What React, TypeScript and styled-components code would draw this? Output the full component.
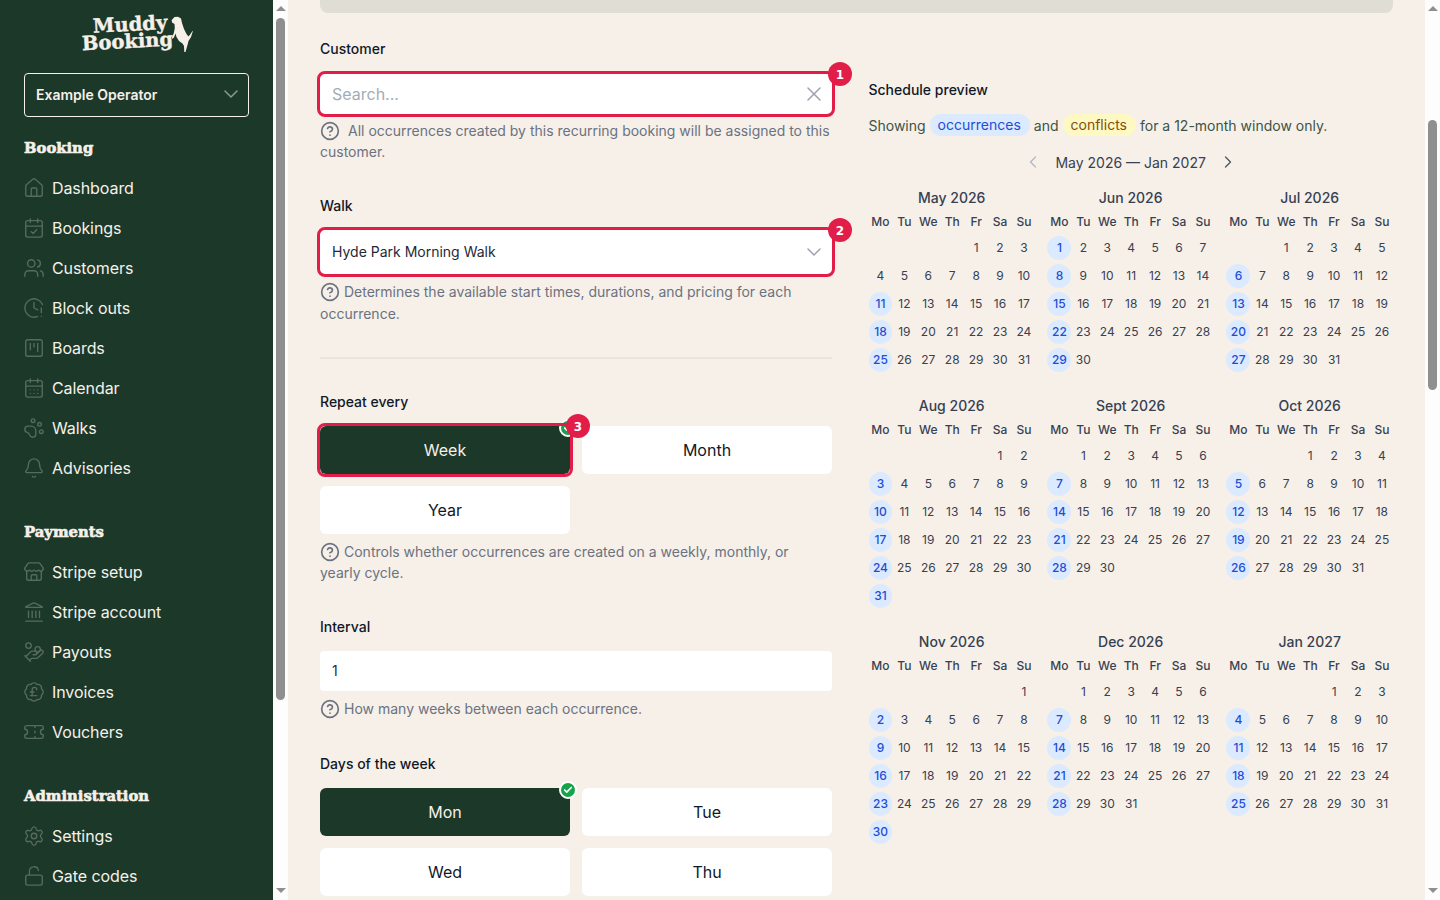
import { useLayoutEffect, useRef } from 'react';
import styled, { createGlobalStyle } from 'styled-components';
import {
  BadgePoundSterling,
  CalendarCheck,
  CalendarDays,
  Bell,
  Check,
  ChevronDown,
  ChevronLeft,
  ChevronRight,
  CircleHelp,
  ClockAlert,
  HandCoins,
  House,
  Landmark,
  LockOpen,
  PawPrint,
  Settings,
  SquareKanban,
  Store,
  Ticket,
  Users,
  X,
} from 'lucide-react';

const GlobalStyle = createGlobalStyle`
  html, body {
    margin: 0;
    height: 100%;
    overflow: hidden;
    font-family: Inter, "Noto Sans", sans-serif;
  }
  * {
    box-sizing: border-box;
  }
`;

const Page = styled.div`
  display: flex;
  height: 100vh;
`;

const Sidebar = styled.aside`
  flex: 0 0 273px;
  overflow: hidden;
  background: #1c3829;
`;

const SideInner = styled.div`
  min-height: 1148px;
  padding: 0 24px;
  color: #f6f0e9;
`;

const ScrollTrack = styled.div`
  flex: 0 0 15px;
  display: flex;
  flex-direction: column;
  align-items: center;
  background: #fdfdfd;
`;

const ScrollArrow = styled.span<{ $down?: boolean }>`
  flex: none;
  width: 0;
  height: 0;
  margin: ${(p) => (p.$down ? '4px 0 7px' : '6px 0 4px')};
  border-left: 5px solid transparent;
  border-right: 5px solid transparent;
  border-bottom: ${(p) => (p.$down ? 0 : 5)}px solid #8f8f8f;
  border-top: ${(p) => (p.$down ? 5 : 0)}px solid #8f8f8f;
`;

const ScrollThumb = styled.span<{ $top: number; $size: number }>`
  width: 9px;
  height: ${(p) => p.$size}px;
  margin-top: ${(p) => p.$top}px;
  margin-bottom: auto;
  border-radius: 5px;
  background: #8f8f8f;
`;

const Logo = styled.div`
  position: relative;
  width: 112px;
  height: 76px;
  margin-left: 57px;
  padding-top: 19px;
  color: #f6f0e9;
`;

const LogoText = styled.div`
  width: 92px;
  font-family: "DejaVu Serif", serif;
  font-weight: 700;
  font-size: 19.5px;
  line-height: 17px;
  text-align: center;
  -webkit-text-stroke: 0.4px #f6f0e9;
  transform: rotate(-3deg);
`;

const LogoTop = styled.span`
  display: inline-block;
  margin-left: 7px;
`;

const Dog = styled.svg`
  position: absolute;
  left: 89px;
  top: 18px;
`;

const OperatorSelect = styled.div`
  display: flex;
  align-items: center;
  justify-content: space-between;
  height: 44px;
  padding: 0 5px 2px 11px;
  border: 1px solid #f6f0e9;
  border-radius: 4px;
  font-size: 14px;
  font-weight: 600;
  svg {
    color: #8b9a91;
  }
`;

const SectionTitle = styled.h3`
  margin: 21px 0 10px;
  font-family: "DejaVu Serif", serif;
  font-size: 14.8px;
  font-weight: 700;
  line-height: 20px;
  -webkit-text-stroke: 0.6px #f6f0e9;
`;

const NavGroup = styled.nav`
  margin-bottom: 34px;
`;

const NavItem = styled.a`
  display: flex;
  align-items: center;
  gap: 7px;
  height: 40px;
  margin-left: -1px;
  font-size: 16px;
  letter-spacing: -0.08px;
  svg {
    flex: none;
    color: #566b60;
  }
`;

const Main = styled.main`
  flex: 1;
  overflow: hidden;
  background: #f6f0e9;
`;

const MainInner = styled.div`
  min-height: 2900px;
  padding: 0 32px;
`;

const TopBar = styled.div`
  height: 40px;
  margin-top: 323px;
  border-radius: 0 0 8px 8px;
  background: #e0ddd5;
`;

const Columns = styled.div`
  display: grid;
  grid-template-columns: 512px 1fr;
  column-gap: 36.5px;
  align-items: start;
  padding-top: 26px;
`;

const Field = styled.section<{ $gap?: number }>`
  margin-bottom: ${(p) => p.$gap ?? 34}px;
`;

const Label = styled.label<{ $gap?: number }>`
  display: block;
  margin-bottom: ${(p) => p.$gap ?? 14}px;
  font-size: 14px;
  font-weight: 500;
  line-height: 20px;
  color: #111827;
`;

const Highlight = styled.div`
  position: relative;
  border-radius: 8px;
  background: #fff;
  &::after {
    content: '';
    position: absolute;
    inset: -3px;
    border: 3px solid #e11d48;
    border-radius: 8px;
    pointer-events: none;
  }
`;

const StepBadge = styled.span`
  position: absolute;
  z-index: 2;
  top: -12px;
  right: -20px;
  display: flex;
  align-items: center;
  justify-content: center;
  width: 24px;
  height: 24px;
  padding-top: 1px;
  border-radius: 50%;
  background: #e11d48;
  color: #fff;
  font-family: "DejaVu Sans", sans-serif;
  font-size: 12px;
  font-weight: 700;
`;

const TextBox = styled.div<{ $h?: number }>`
  display: flex;
  align-items: center;
  justify-content: space-between;
  height: ${(p) => p.$h ?? 40}px;
  padding: 0 6px 1px 12px;
  border-radius: 4px;
  background: #fff;
  font-size: 14px;
  color: #1f2937;
  svg {
    color: #9ca3af;
  }
`;

const Placeholder = styled.span`
  margin-top: 1px;
  font-size: 16px;
  color: #a3acb9;
`;

const Help = styled.p<{ $wide?: boolean; $top?: number; $line?: number }>`
  margin: ${(p) => p.$top ?? 7}px 0 0;
  font-size: 14px;
  line-height: ${(p) => p.$line ?? 21}px;
  color: #6b7280;
  svg {
    vertical-align: -5px;
    margin-right: ${(p) => (p.$wide ? 8 : 4)}px;
  }
`;

const Divider = styled.hr`
  height: 2px;
  margin: 0 0 33px;
  border: 0;
  background: #e9e4dc;
`;

const Choices = styled.div`
  display: grid;
  grid-template-columns: 1fr 1fr;
  gap: 12px;
`;

const ChoiceButton = styled.button<{ $active?: boolean }>`
  position: relative;
  display: block;
  width: 100%;
  height: 48px;
  border: 0;
  border-radius: 6px;
  background: ${(p) => (p.$active ? '#1c3829' : '#fff')};
  color: ${(p) => (p.$active ? '#f6f0e9' : '#111827')};
  font-family: inherit;
  font-size: 16px;
`;

const CheckMark = styled.span`
  position: absolute;
  top: -7px;
  right: -7px;
  display: flex;
  align-items: center;
  justify-content: center;
  width: 18px;
  height: 18px;
  border: 2px solid #fff;
  border-radius: 50%;
  background: #16a34a;
  color: #fff;
`;

const Preview = styled.div`
  padding-top: 41px;
`;

const PreviewTitle = styled.h4`
  margin: 0 0 14px;
  font-size: 14px;
  font-weight: 500;
  line-height: 20px;
  color: #111827;
`;

const Legend = styled.p`
  display: flex;
  align-items: center;
  gap: 4px;
  height: 22px;
  margin: 0 0 14px;
  font-size: 14px;
  color: #3d5347;
`;

const Pill = styled.span<{ $tone: 'blue' | 'yellow' }>`
  padding: 2px 9px 2px 8px;
  border-radius: 999px;
  line-height: 18px;
  background: ${(p) => (p.$tone === 'blue' ? '#dbeafe' : '#fef9c3')};
  color: ${(p) => (p.$tone === 'blue' ? '#1d4ed8' : '#854d0e')};
`;

const RangeNav = styled.div`
  display: flex;
  align-items: center;
  justify-content: center;
  gap: 12px;
  height: 24px;
  margin-bottom: 14px;
  padding-right: 1px;
  font-size: 14px;
  color: #374151;
`;

const NavArrow = styled.span<{ $muted?: boolean }>`
  display: flex;
  color: ${(p) => (p.$muted ? '#b4b8bd' : '#4b5563')};
`;

const MonthGrid = styled.div`
  display: grid;
  grid-template-columns: repeat(3, 167.4px);
  column-gap: 11.6px;
  row-gap: 24px;
  align-items: start;
`;

const MonthTitle = styled.div`
  margin-bottom: 2px;
  padding-right: 1px;
  font-size: 14px;
  font-weight: 500;
  line-height: 20px;
  text-align: center;
  color: #374151;
`;

const Week = styled.div`
  display: grid;
  grid-template-columns: repeat(7, 1fr);
  height: 24px;
  margin-bottom: 2px;
  font-size: 12px;
  font-weight: 500;
  line-height: 24px;
  text-align: center;
  color: #374151;
`;

const Days = styled.div`
  display: grid;
  grid-template-columns: repeat(7, 1fr);
  grid-auto-rows: 24px;
  row-gap: 4px;
`;

const Day = styled.span<{ $on?: boolean }>`
  border-radius: 50%;
  font-size: 12px;
  font-weight: ${(p) => (p.$on ? 500 : 400)};
  line-height: 24px;
  text-align: center;
  background: ${(p) => (p.$on ? '#dbeafe' : 'transparent')};
  color: ${(p) => (p.$on ? '#1d4ed8' : '#374151')};
`;

const navGroups = [
  {
    title: 'Booking',
    items: [
      ['Dashboard', House],
      ['Bookings', CalendarCheck],
      ['Customers', Users],
      ['Block outs', ClockAlert],
      ['Boards', SquareKanban],
      ['Calendar', CalendarDays],
      ['Walks', PawPrint],
      ['Advisories', Bell],
    ],
  },
  {
    title: 'Payments',
    items: [
      ['Stripe setup', Store],
      ['Stripe account', Landmark],
      ['Payouts', HandCoins],
      ['Invoices', BadgePoundSterling],
      ['Vouchers', Ticket],
    ],
  },
  {
    title: 'Administration',
    items: [
      ['Settings', Settings],
      ['Gate codes', LockOpen],
    ],
  },
] as const;

const months = [
  { title: 'May 2026', offset: 4, days: 31, from: 11 },
  { title: 'Jun 2026', offset: 0, days: 30 },
  { title: 'Jul 2026', offset: 2, days: 31 },
  { title: 'Aug 2026', offset: 5, days: 31 },
  { title: 'Sept 2026', offset: 1, days: 30 },
  { title: 'Oct 2026', offset: 3, days: 31 },
  { title: 'Nov 2026', offset: 6, days: 30 },
  { title: 'Dec 2026', offset: 1, days: 31 },
  { title: 'Jan 2027', offset: 4, days: 31 },
];

const weekdays = ['Mo', 'Tu', 'We', 'Th', 'Fr', 'Sa', 'Su'];

type MonthProps = { title: string; offset: number; days: number; from?: number };

const Month = ({ title, offset, days, from = 1 }: MonthProps) => (
  <div>
    <MonthTitle>{title}</MonthTitle>
    <Week>
      {weekdays.map((d) => (
        <span key={d}>{d}</span>
      ))}
    </Week>
    <Days>
      {Array.from({ length: offset }, (_, i) => (
        <span key={`blank-${i}`} />
      ))}
      {Array.from({ length: days }, (_, i) => (
        <Day key={i} $on={(offset + i) % 7 === 0 && i + 1 >= from}>
          {i + 1}
        </Day>
      ))}
    </Days>
  </div>
);

const Choice = ({ label, active }: { label: string; active?: boolean }) => (
  <ChoiceButton $active={active}>
    {label}
    {active && (
      <CheckMark>
        <Check size={10} strokeWidth={4} />
      </CheckMark>
    )}
  </ChoiceButton>
);

const HelpIcon = () => <CircleHelp size={20} strokeWidth={2} />;

const Scrollbar = ({ top, size }: { top: number; size: number }) => (
  <ScrollTrack>
    <ScrollArrow />
    <ScrollThumb $top={top} $size={size} />
    <ScrollArrow $down />
  </ScrollTrack>
);

export default function App() {
  const sideRef = useRef<HTMLElement>(null);
  const mainRef = useRef<HTMLElement>(null);

  // the page is photographed part way down, as in the reference
  useLayoutEffect(() => {
    if (sideRef.current) sideRef.current.scrollTop = 3;
    if (mainRef.current) mainRef.current.scrollTop = 350;
  }, []);

  return (
    <Page>
      <GlobalStyle />
      <Sidebar ref={sideRef}>
        <SideInner>
          <Logo>
            <LogoText>
              <LogoTop>Muddy</LogoTop>
              <br />
              Booking
            </LogoText>
            <Dog width="24" height="38" viewBox="170 15 24 38" fill="currentColor">
              <path d="M171.7 20 L174.5 17 L178 16.8 L181 18.5 L182 23 L184 29 L186.5 34 L188.5 36.5 L190.5 34 L192.6 30.7 L192.8 31.5 L191 37 L188.5 41 L187.5 45 L185.5 52 L184.3 52 L184 46 L182.5 43.5 L179 41 L176.5 37 L175.5 33.5 L174 37.5 L172 39 L172 37.5 L173.8 33 L174.8 28 L174.5 24 L172 22.5 Z" />
            </Dog>
          </Logo>
          <OperatorSelect>
            Example Operator
            <ChevronDown size={24} strokeWidth={1.5} />
          </OperatorSelect>
          {navGroups.map((group) => (
            <NavGroup key={group.title}>
              <SectionTitle>{group.title}</SectionTitle>
              {group.items.map(([label, Icon]) => (
                <NavItem key={label}>
                  <Icon size={22} strokeWidth={1.5} />
                  {label}
                </NavItem>
              ))}
            </NavGroup>
          ))}
        </SideInner>
      </Sidebar>
      <Scrollbar top={3} size={682} />
      <Main ref={mainRef}>
        <MainInner>
          <TopBar />
          <Columns>
            <div>
              <Field>
                <Label $gap={15}>Customer</Label>
                <Highlight>
                  <TextBox>
                    <Placeholder>Search...</Placeholder>
                    <X size={24} strokeWidth={1.5} />
                  </TextBox>
                  <StepBadge>1</StepBadge>
                </Highlight>
                <Help $wide $top={6}>
                  <HelpIcon />
                  All occurrences created by this recurring booking will be assigned to this customer.
                </Help>
              </Field>
              <Field $gap={32}>
                <Label>Walk</Label>
                <Highlight>
                  <TextBox $h={44}>
                    Hyde Park Morning Walk
                    <ChevronDown size={24} strokeWidth={1.5} />
                  </TextBox>
                  <StepBadge>2</StepBadge>
                </Highlight>
                <Help $line={22}>
                  <HelpIcon />
                  Determines the available start times, durations, and pricing for each occurrence.
                </Help>
              </Field>
              <Divider />
              <Field>
                <Label>Repeat every</Label>
                <Choices>
                  <Highlight>
                    <Choice label="Week" active />
                    <StepBadge>3</StepBadge>
                  </Highlight>
                  <Choice label="Month" />
                  <Choice label="Year" />
                </Choices>
                <Help>
                  <HelpIcon />
                  Controls whether occurrences are created on a weekly, monthly, or yearly cycle.
                </Help>
              </Field>
              <Field $gap={35}>
                <Label>Interval</Label>
                <TextBox>1</TextBox>
                <Help>
                  <HelpIcon />
                  How many weeks between each occurrence.
                </Help>
              </Field>
              <Field>
                <Label>Days of the week</Label>
                <Choices>
                  <Choice label="Mon" active />
                  <Choice label="Tue" />
                  <Choice label="Wed" />
                  <Choice label="Thu" />
                </Choices>
              </Field>
            </div>
            <Preview>
              <PreviewTitle>Schedule preview</PreviewTitle>
              <Legend>
                Showing <Pill $tone="blue">occurrences</Pill> and <Pill $tone="yellow">conflicts</Pill> for a
                12-month window only.
              </Legend>
              <RangeNav>
                <NavArrow $muted>
                  <ChevronLeft size={20} strokeWidth={1.5} />
                </NavArrow>
                May 2026 — Jan 2027
                <NavArrow>
                  <ChevronRight size={20} strokeWidth={1.5} />
                </NavArrow>
              </RangeNav>
              <MonthGrid>
                {months.map((m) => (
                  <Month key={m.title} {...m} />
                ))}
              </MonthGrid>
            </Preview>
          </Columns>
        </MainInner>
      </Main>
      <Scrollbar top={105} size={270} />
    </Page>
  );
}
